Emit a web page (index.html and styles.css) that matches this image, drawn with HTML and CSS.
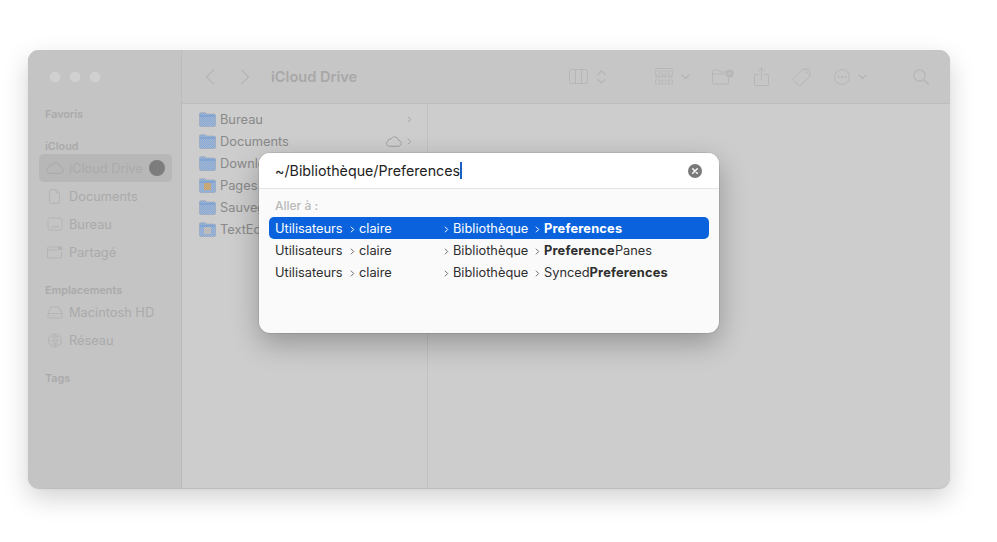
FILE: index.html
```html
<!DOCTYPE html>
<html lang="fr">
<head>
<meta charset="utf-8">
<title>Finder - Aller au dossier</title>
<link rel="stylesheet" href="styles.css">
</head>
<body>
<svg class="sprite" width="0" height="0" aria-hidden="true">
  <defs>
    <pattern id="dither" width="2" height="2" patternUnits="userSpaceOnUse">
      <rect width="2" height="2" fill="#82aae0"/>
      <rect width="1" height="1" fill="#a8b6c8"/>
      <rect x="1" y="1" width="1" height="1" fill="#a8b6c8"/>
    </pattern>
  </defs>
  <symbol id="folder" viewBox="0 0 17 15">
    <path d="M.5 3V2Q.5.7 2 .7h3.600q.8 0 1.300.6l.7.7H15q1.500 0 1.500 1.500V13q0 1.500-1.500 1.500H2Q.5 14.500.5 13Z" fill="url(#dither)" stroke="#8f9fb4" stroke-width=".5"/>
    <path d="M.7 4h15.600" stroke="#6f9ad0" stroke-width="1" fill="none"/>
  </symbol>
  <symbol id="cloud" viewBox="0 0 18 12">
    <path d="M4.300 11.400h9.400c2 0 3.600-1.400 3.600-3.200 0-1.700-1.300-3-3-3.200C13.900 2.500 12 .8 9.700.8 7.900.8 6.400 1.800 5.600 3.400 5.100 3.100 4.600 3 4.100 3.100 3 3.300 2.300 4.200 2.300 5.400 1.200 6 .6 7.100.6 8.200c0 1.800 1.600 3.200 3.700 3.200Z" fill="none" stroke="currentColor"/>
  </symbol>
  <symbol id="chev" viewBox="0 0 5 7">
    <path d="M1.200 1 3.700 3.500 1.200 6" fill="none" stroke="currentColor" stroke-width="1" stroke-linecap="round" stroke-linejoin="round"/>
  </symbol>
  <symbol id="down" viewBox="0 0 9 6">
    <path d="M1 1l3.500 3.500L8 1" fill="none" stroke="currentColor" stroke-width="1.500" stroke-linecap="round" stroke-linejoin="round"/>
  </symbol>
</svg>

<div class="window">
  <aside class="sidebar">
    <div class="lights"><span class="light"></span><span class="light"></span><span class="light"></span></div>
    <h2 class="sec sec-first">Favoris</h2>
    <h2 class="sec sec-icloud">iCloud</h2>
    <div class="item active">
      <svg class="side-icon" width="18" height="12"><use href="#cloud"/></svg>
      <span class="item-label">iCloud Drive</span>
      <span class="badge"></span>
    </div>
    <div class="item">
      <svg class="side-icon" width="18" height="15" viewBox="0 0 18 15"><path d="M4.500.7h5.800l3.200 3.300v9.300q0 1-1 1h-8q-1 0-1-1V1.700q0-1 1-1ZM10.200.8V4h3.200" fill="none" stroke="currentColor"/></svg>
      <span class="item-label">Documents</span>
    </div>
    <div class="item">
      <svg class="side-icon" width="18" height="15" viewBox="0 0 18 15"><rect x="2" y="1" width="14" height="12" rx="1.500" fill="none" stroke="currentColor"/><path d="M5 9.800h8" stroke="currentColor" fill="none"/></svg>
      <span class="item-label">Bureau</span>
    </div>
    <div class="item">
      <svg class="side-icon" width="18" height="15" viewBox="0 0 18 15"><path d="M12 2H2.500q-1 0-1 1v9q0 1 1 1h12q1 0 1-1V7M1.500 5h10" fill="none" stroke="currentColor"/><circle cx="14.200" cy="3.200" r="2.300" fill="currentColor"/></svg>
      <span class="item-label">Partagé</span>
    </div>
    <h2 class="sec sec-places">Emplacements</h2>
    <div class="item">
      <svg class="side-icon" width="18" height="15" viewBox="0 0 18 15"><path d="M5 2h8l3 6.500v3q0 1.500-1.500 1.500h-11Q2 13 2 11.500v-3ZM2 8.500h14M4.500 10.800h1M7 10.800h1" fill="none" stroke="currentColor"/></svg>
      <span class="item-label">Macintosh HD</span>
    </div>
    <div class="item">
      <svg class="side-icon" width="18" height="15" viewBox="0 0 18 15"><circle cx="9" cy="7.500" r="6.500" fill="none" stroke="currentColor"/><path d="M9 1v13M2.500 7.500h13M4.500 3q4.500 2.500 9 0M4.500 12q4.500-2.500 9 0M9 1Q4.800 7.500 9 14M9 1q4.200 6.500 0 13" fill="none" stroke="currentColor" stroke-width=".7"/></svg>
      <span class="item-label">Réseau</span>
    </div>
    <h2 class="sec sec-tags">Tags</h2>
  </aside>

  <div class="main">
    <header class="toolbar">
      <svg class="nav-back" width="10" height="16" viewBox="0 0 10 16"><path d="M8.500 1 1.500 8l7 7" fill="none" stroke="currentColor" stroke-width="1.300" stroke-linecap="round" stroke-linejoin="round"/></svg>
      <svg class="nav-fwd" width="10" height="16" viewBox="0 0 10 16"><path d="M1.500 1l7 7-7 7" fill="none" stroke="currentColor" stroke-width="1.300" stroke-linecap="round" stroke-linejoin="round"/></svg>
      <h1 class="tb-title">iCloud Drive</h1>
      <div class="tools">
        <svg class="tool t-cols" width="19" height="15" viewBox="0 0 19 15"><rect x=".5" y=".5" width="18" height="14" rx="2" fill="none" stroke="currentColor"/><path d="M6.500.5v14M12.500.5v14" stroke="currentColor" fill="none"/></svg>
        <svg class="tool t-updown" width="9" height="16" viewBox="0 0 9 16"><path d="M1 5.500 4.500 2 8 5.500M1 10.500 4.500 14 8 10.500" fill="none" stroke="currentColor" stroke-width="1.300" stroke-linecap="round" stroke-linejoin="round"/></svg>
        <svg class="tool t-grid" width="18" height="18" viewBox="0 0 18 18"><path d="M0 .5h18M0 8.800h18" stroke="currentColor" fill="none"/><g fill="none" stroke="currentColor" stroke-width=".8"><rect x=".5" y="3" width="4" height="4"/><rect x="7" y="3" width="4" height="4"/><rect x="13.500" y="3" width="4" height="4"/><rect x=".5" y="12" width="4" height="4"/><rect x="7" y="12" width="4" height="4"/><rect x="13.500" y="12" width="4" height="4"/></g></svg>
        <svg class="tool t-down1" width="9" height="6"><use href="#down"/></svg>
        <svg class="tool t-newf" width="22" height="16" viewBox="0 0 22 16"><path d="M14 3H8L6.500 1H2Q.5 1 .5 2.500v11Q.5 15 2 15h13q1.500 0 1.500-1.500V9M.5 5h12" fill="none" stroke="currentColor"/><circle cx="17.500" cy="4.500" r="4" fill="currentColor"/><path d="M17.500 2.500v4M15.500 4.500h4" stroke="#c5c5c5" fill="none"/></svg>
        <svg class="tool t-share" width="15" height="20" viewBox="0 0 15 20"><path d="M4.500 7.500h-3q-1 0-1 1v9q0 1 1 1h12q1 0 1-1v-9q0-1-1-1h-3M7.500 12.500V1M4.500 4l3-3 3 3" fill="none" stroke="currentColor" stroke-linecap="round" stroke-linejoin="round"/></svg>
        <svg class="tool t-tag" width="19" height="19" viewBox="0 0 19 19"><path d="M11 1.200h5.300q1.500 0 1.500 1.500V8L8.500 17.300q-1 1-2 0L1.700 12.500q-1-1 0-2Z" fill="none" stroke="currentColor"/><circle cx="14.600" cy="4.400" r="1" fill="currentColor"/></svg>
        <svg class="tool t-more" width="16" height="16" viewBox="0 0 16 16"><circle cx="8" cy="8" r="7.500" fill="none" stroke="currentColor"/><circle cx="4.500" cy="8" r="1" fill="currentColor"/><circle cx="8" cy="8" r="1" fill="currentColor"/><circle cx="11.500" cy="8" r="1" fill="currentColor"/></svg>
        <svg class="tool t-down2" width="9" height="6"><use href="#down"/></svg>
        <svg class="tool t-search" width="16" height="16" viewBox="0 0 16 16"><circle cx="6.500" cy="6.500" r="5.700" fill="none" stroke="currentColor" stroke-width="1.200"/><path d="M10.800 10.800 15.300 15.300" stroke="currentColor" stroke-width="1.500" stroke-linecap="round" fill="none"/></svg>
      </div>
    </header>
    <div class="content">
      <div class="column">
        <div class="row"><svg class="folder" width="17" height="15"><use href="#folder"/></svg><span class="row-name">Bureau</span><svg class="row-chev" width="5" height="7"><use href="#chev"/></svg></div>
        <div class="row"><svg class="folder" width="17" height="15"><use href="#folder"/></svg><span class="row-name">Documents</span><svg class="row-cloud" width="16" height="11"><use href="#cloud"/></svg><svg class="row-chev" width="5" height="7"><use href="#chev"/></svg></div>
        <div class="row"><svg class="folder" width="17" height="15"><use href="#folder"/></svg><span class="row-name">Downloads</span></div>
        <div class="row"><span class="folder-wrap"><svg class="folder" width="17" height="15"><use href="#folder"/></svg><span class="mark mark-pages"></span></span><span class="row-name">Pages</span></div>
        <div class="row"><svg class="folder" width="17" height="15"><use href="#folder"/></svg><span class="row-name">Sauvegardes</span></div>
        <div class="row"><span class="folder-wrap"><svg class="folder" width="17" height="15"><use href="#folder"/></svg><span class="mark mark-text"></span></span><span class="row-name">TextEdit</span></div>
      </div>
    </div>
  </div>

  <div class="dialog">
    <div class="dlg-head">
      <span class="dlg-input">~/Bibliothèque/Preferences<span class="caret"></span></span>
      <svg class="dlg-clear" width="14" height="14" viewBox="0 0 14 14"><circle cx="7" cy="7" r="7" fill="#7a7a7a"/><path d="M4.700 4.700l4.600 4.600M9.300 4.700 4.700 9.300" stroke="#fff" stroke-width="1.400" stroke-linecap="round" fill="none"/></svg>
    </div>
    <div class="dlg-body">
      <div class="goto">Aller à :</div>
      <div class="path sel">
        <span class="c1">Utilisateurs</span>
        <span class="c2"><svg width="5" height="7"><use href="#chev"/></svg>claire</span>
        <span class="c3"><svg width="5" height="7"><use href="#chev"/></svg>Bibliothèque</span>
        <span class="c4"><svg width="5" height="7"><use href="#chev"/></svg><b>Preferences</b></span>
      </div>
      <div class="path">
        <span class="c1">Utilisateurs</span>
        <span class="c2"><svg width="5" height="7"><use href="#chev"/></svg>claire</span>
        <span class="c3"><svg width="5" height="7"><use href="#chev"/></svg>Bibliothèque</span>
        <span class="c4"><svg width="5" height="7"><use href="#chev"/></svg><b>Preference</b>Panes</span>
      </div>
      <div class="path">
        <span class="c1">Utilisateurs</span>
        <span class="c2"><svg width="5" height="7"><use href="#chev"/></svg>claire</span>
        <span class="c3"><svg width="5" height="7"><use href="#chev"/></svg>Bibliothèque</span>
        <span class="c4"><svg width="5" height="7"><use href="#chev"/></svg>Synced<b>Preferences</b></span>
      </div>
    </div>
  </div>
</div>
</body>
</html>
```
FILE: styles.css
```css
* { box-sizing: border-box; }
html, body { height: 100%; }
body {
  margin: 0;
  padding: 50px 47px 54px 28px;
  background: #fff;
  font-family: Inter, "Liberation Sans", sans-serif;
  overflow: hidden;
}
.sprite { position: absolute; }
.window {
  position: relative;
  display: flex;
  height: 438px;
  border-radius: 11px;
  background: #cdcdcd;
  box-shadow: 0 1px 1px rgba(0,0,0,.16), 0 10px 26px rgba(0,0,0,.18);
}
.sidebar {
  width: 154px;
  flex: none;
  background: #c4c4c4;
  border-right: 1px solid #bcbcbc;
  border-radius: 11px 0 0 11px;
  padding: 0 9px 0 11px;
}
.lights { display: flex; gap: 8px; padding: 21px 0 0 10px; height: 54px; }
.light { width: 12px; height: 12px; border-radius: 50%; background: #d0d0d0; box-shadow: inset 0 0 0 .5px #bdbdbd; }
.sec { margin: 0; font-size: 10.800px; line-height: 14px; font-weight: 600; color: #aaaaaa; padding-left: 6px; }
.sec-first { margin-top: 4px; }
.sec-icloud { margin-top: 18px; }
.sec-places { margin-top: 18px; }
.sec-tags { margin-top: 18px; }
.item { display: flex; align-items: center; height: 28px; padding-left: 7px; border-radius: 5px; font-size: 12.800px; color: #aaaaaa; }
.active { background: #b7b7b7; }
.side-icon { flex: none; width: 18px; margin-right: 5px; color: #b4b4b4; }
.active .side-icon { color: #a8a8a8; }
.item-label { flex: 1; white-space: nowrap; }
.badge { width: 16px; height: 16px; border-radius: 50%; background: #7d7d7d; margin-right: 7px; }
.main { flex: 1; display: flex; flex-direction: column; min-width: 0; }
.toolbar {
  position: relative;
  height: 54px;
  flex: none;
  display: flex;
  align-items: center;
  background: #c6c6c6;
  border-bottom: 1px solid #bdbdbd;
  border-radius: 0 11px 0 0;
  color: #b6b6b6;
  padding-left: 23px;
}
.nav-fwd { margin-left: 25px; }
.tb-title { flex: none; width: 82px; margin: 0 0 0 21px; font-size: 14.600px; font-weight: 600; color: #a8a8a8; white-space: nowrap; }
.tools { position: relative; flex: 1; height: 100%; }
.tool { position: absolute; }
.t-cols { left: 216px; top: 19px; }
.t-updown { left: 244px; top: 19px; }
.t-grid { left: 302px; top: 18px; }
.t-down1 { left: 328px; top: 24px; }
.t-newf { left: 359px; top: 19px; }
.t-share { left: 401px; top: 17px; }
.t-tag { left: 439px; top: 18px; }
.t-more { left: 481px; top: 19px; }
.t-down2 { left: 505px; top: 24px; }
.t-search { left: 560px; top: 19px; }
.content { flex: 1; display: flex; min-height: 0; }
.column { width: 246px; border-right: 1px solid #c0c0c0; padding: 4px 14px 0 17px; }
.row { display: flex; align-items: center; height: 22px; font-size: 12.800px; color: #898989; }
.folder { flex: none; margin-right: 4px; display: block; }
.folder-wrap { position: relative; flex: none; }
.mark { position: absolute; left: 5px; top: 5px; width: 7px; height: 7px; }
.mark-pages { background: #c8a878; }
.mark-text { background: #bcbcbc; }
.row-name { flex: 1; white-space: nowrap; }
.row-cloud { color: #9a9a9a; margin-right: 5px; }
.row-chev { color: #a0a0a0; margin-right: 1px; }
.dialog {
  position: absolute;
  left: 231px;
  top: 103px;
  width: 460px;
  height: 180px;
  background: #fafafa;
  border-radius: 11px;
  box-shadow: 0 0 0 .5px rgba(0,0,0,.15), 0 10px 28px rgba(0,0,0,.28);
  overflow: hidden;
}
.dlg-head {
  display: flex;
  align-items: center;
  justify-content: space-between;
  height: 36px;
  padding: 0 17px 0 16px;
  background: #fff;
  border-bottom: 1px solid #e5e5e5;
}
.dlg-input { font-size: 14.250px; color: #232323; white-space: nowrap; display: flex; align-items: center; }
.caret { display: inline-block; width: 2px; height: 17px; background: #1a5fc4; }
.dlg-clear { flex: none; }
.dlg-body { padding: 9px 10px 0; }
.goto { font-size: 12px; font-weight: 500; line-height: 16px; color: #b9b9b9; padding-left: 6px; margin-bottom: 3px; }
.path { display: flex; align-items: center; height: 22px; padding-left: 6px; border-radius: 5px; font-size: 12.800px; color: #2e2e2e; white-space: nowrap; }
.path svg { color: #6b6b6b; margin: 0 4px 0 0; flex: none; }
.path b { font-weight: 700; letter-spacing: .2px; }
.sel { background: #0a63dc; color: #fff; }
.sel svg { color: #fff; }
.c1 { width: 75px; }
.c2 { width: 94px; }
.c3 { width: 91px; }
```
